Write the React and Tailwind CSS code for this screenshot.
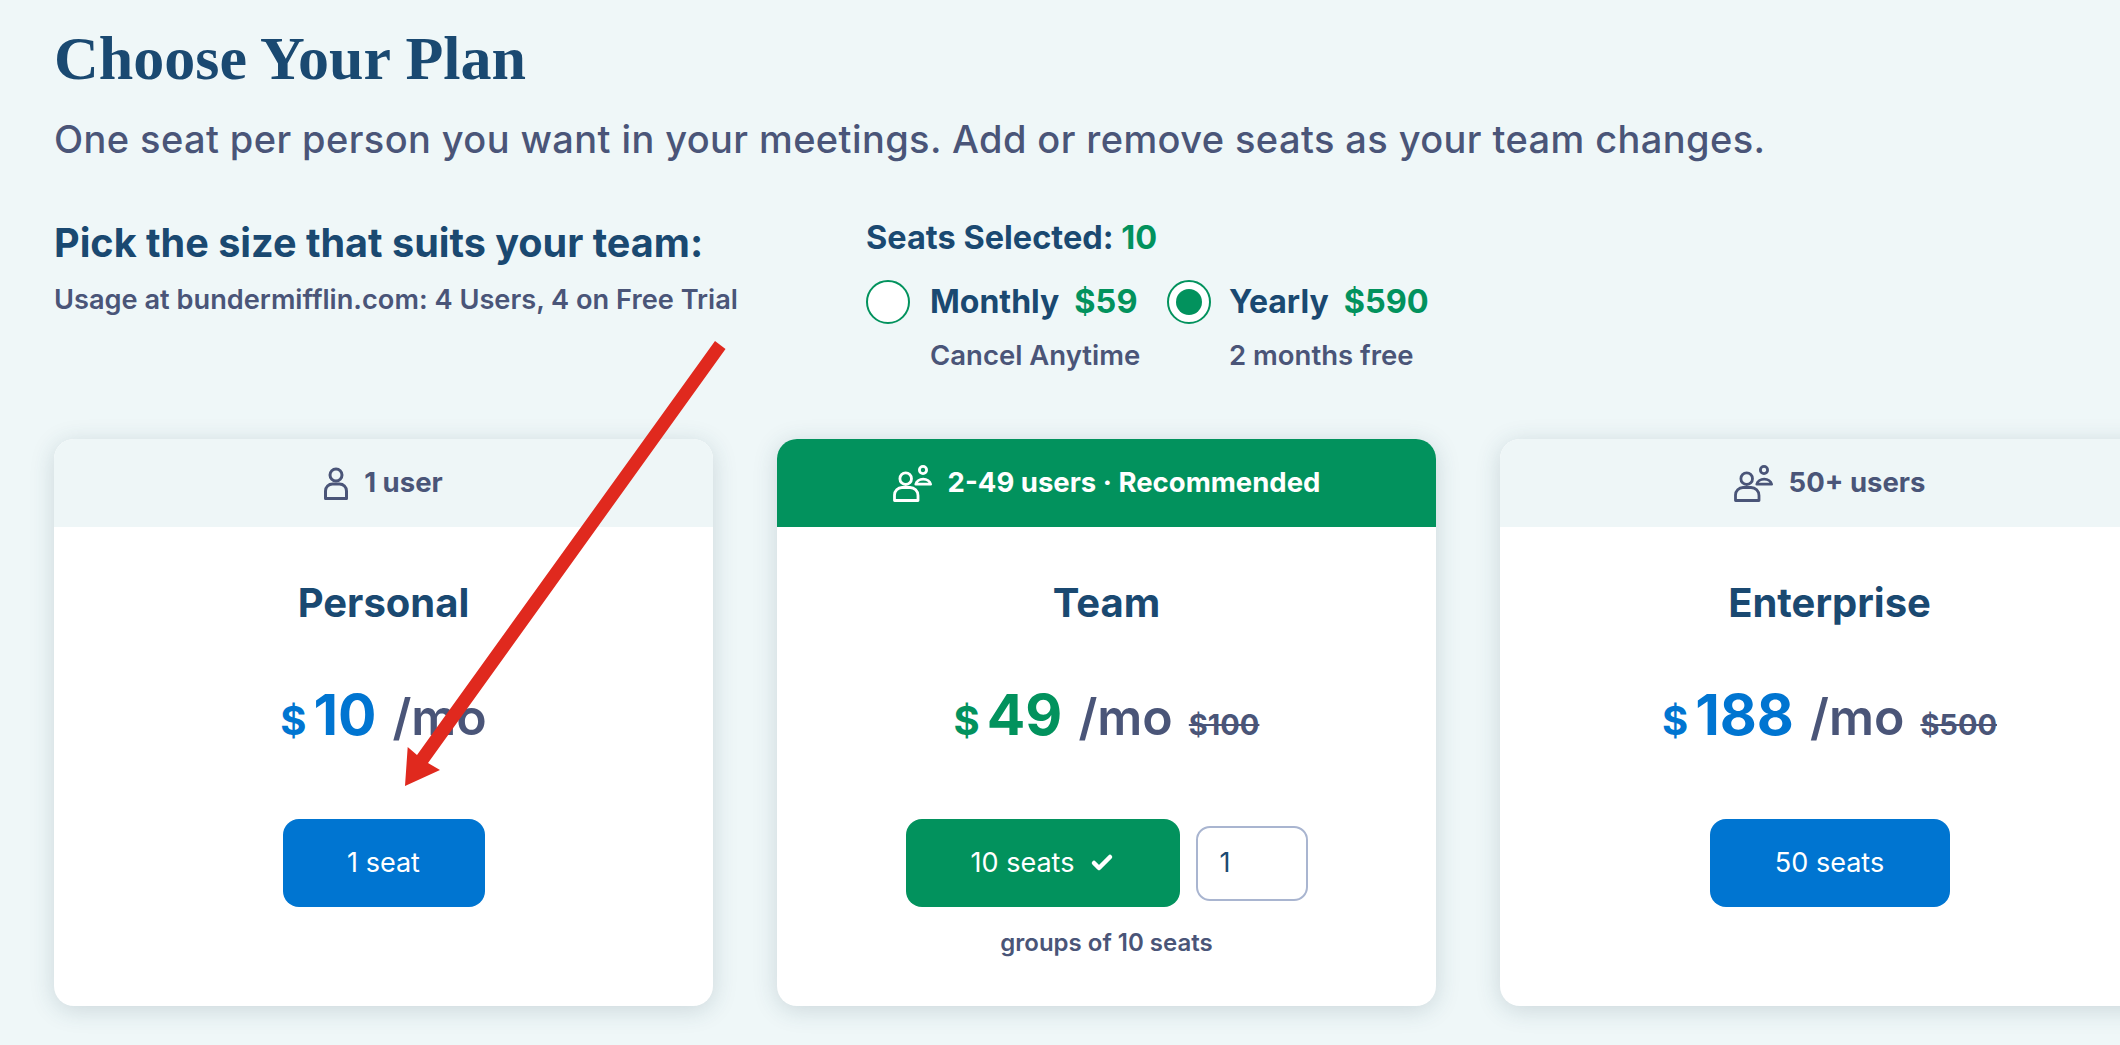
import { Check } from "lucide-react";

const font = "font-['Inter','Liberation_Sans',sans-serif]";

function UserIcon({ className }) {
  return (
    <svg viewBox="0 0 24 33" fill="none" stroke="currentColor" strokeWidth="3" className={className}>
      <circle cx="12" cy="8" r="6" />
      <path d="M1.5 31.5V24a7 7 0 0 1 7-7h7a7 7 0 0 1 7 7v7.5z" strokeLinejoin="round" />
    </svg>
  );
}

function UsersIcon({ className }) {
  return (
    <svg viewBox="0 0 39 37" fill="none" stroke="currentColor" strokeWidth="2.8" className={className}>
      <circle cx="12.7" cy="13.7" r="5.8" />
      <path d="M1.5 35.5V30a7.5 7.5 0 0 1 7.5-7.5h8a8 8 0 0 1 8 8v5z" strokeLinejoin="round" />
      <circle cx="30" cy="5" r="3.6" />
      <path d="M22.8 19.2a7.5 6 0 0 1 14.8 0z" strokeLinejoin="round" />
    </svg>
  );
}

function PlanCard({ audience, icon, name, price, was, accent, highlighted, children }) {
  return (
    <div className="w-[659px] h-[567px] shrink-0 rounded-[20px] bg-white overflow-hidden shadow-[0_4px_24px_rgba(40,70,90,0.18)]">
      <div className={`h-[88px] flex items-center justify-center gap-[16px] text-[27.5px] font-bold ${highlighted ? "bg-[#02925d] text-white" : "bg-[#eef6f7] text-[#4a5578]"}`}>
        {icon}
        <span>{audience}</span>
      </div>
      <div className="flex flex-col items-center">
        <h3 className="mt-[53px] text-[40px] leading-[46px] font-bold text-[#1a4971]">{name}</h3>
        <div className="mt-[54px] h-[70px] flex items-baseline">
          <span className={`text-[40px] font-bold ${accent}`}>$</span>
          <span className={`ml-[7px] text-[57px] leading-[70px] font-bold ${accent}`}>{price}</span>
          <span className="ml-[16px] text-[50px] font-semibold text-[#4a5578]">/mo</span>
          {was && <span className="ml-[16px] text-[29px] font-bold line-through text-[#4a5578]">{was}</span>}
        </div>
        {children}
      </div>
    </div>
  );
}

export default function App() {
  return (
    <div className={`relative w-[2120px] h-[1045px] overflow-hidden bg-[#eff7f8] pl-[54px] ${font}`}>
      <h1 className="pt-[28px] text-[62px] leading-[60px] font-bold font-['Liberation_Serif',serif] text-[#1a4971]">Choose Your Plan</h1>
      <p className="mt-[29px] text-[38px] leading-[44px] font-medium tracking-[0.4px] text-[#4a5578]">One seat per person you want in your meetings. Add or remove seats as your team changes.</p>

      <div className="mt-[59px] flex h-[219px]">
        <div className="w-[812px] pt-[1px]">
          <h2 className="text-[39.6px] leading-[44px] font-bold text-[#1a4971]">Pick the size that suits your team:</h2>
          <p className="mt-[19px] text-[27.2px] leading-[32px] font-semibold text-[#4a5578]">Usage at bundermifflin.com: 4 Users, 4 on Free Trial</p>
        </div>
        <div>
          <div className="text-[32.5px] leading-[36px] font-bold text-[#1a4971]">Seats Selected: <span className="text-[#02925d]">10</span></div>
          <div className="mt-[22px] flex">
            <div className="w-[301px]">
              <div className="flex items-center">
                <span className="w-[44px] h-[44px] rounded-full border-2 border-[#02925d] bg-white" />
                <span className="ml-[20px] text-[32px] font-bold text-[#1a4971]">Monthly</span>
                <span className="ml-[15px] text-[32.5px] font-bold text-[#02925d]">$59</span>
              </div>
              <div className="mt-[11px] ml-[64px] text-[27.5px] leading-[34px] font-semibold text-[#4a5578]">Cancel Anytime</div>
            </div>
            <div>
              <div className="flex items-center">
                <span className="w-[44px] h-[44px] rounded-full border-2 border-[#02925d] bg-white flex items-center justify-center">
                  <span className="w-[26px] h-[26px] rounded-full bg-[#02925d]" />
                </span>
                <span className="ml-[18px] text-[32px] font-bold text-[#1a4971]">Yearly</span>
                <span className="ml-[15px] text-[32.5px] font-bold text-[#02925d]">$590</span>
              </div>
              <div className="mt-[11px] ml-[62px] text-[27.5px] leading-[34px] font-semibold text-[#4a5578]">2 months free</div>
            </div>
          </div>
        </div>
      </div>

      <div className="flex gap-[64px]">
        <PlanCard audience="1 user" icon={<UserIcon className="w-[24px] h-[33px]" />} name="Personal" price="10" accent="text-[#0075d1]">
          <button className="mt-[69px] w-[202px] h-[88px] rounded-[16px] bg-[#0075d1] text-white text-[27px]">1 seat</button>
        </PlanCard>
        <PlanCard highlighted audience="2-49 users · Recommended" icon={<UsersIcon className="w-[39px] h-[37px]" />} name="Team" price="49" was="$100" accent="text-[#02925d]">
          <div className="mt-[69px] flex items-center gap-[16px]">
            <button className="w-[274px] h-[88px] rounded-[16px] bg-[#02925d] text-white text-[27px] flex items-center justify-center gap-[16px]">
              10 seats <Check className="w-[24px] h-[24px]" strokeWidth={4.5} />
            </button>
            <div className="w-[112px] h-[75px] rounded-[14px] border-2 border-[#a9b5d0] flex items-center pl-[22px] text-[27px] text-[#1a4971]">1</div>
          </div>
          <div className="mt-[18px] text-[24px] font-semibold text-[#4a5578]">groups of 10 seats</div>
        </PlanCard>
        <PlanCard audience="50+ users" icon={<UsersIcon className="w-[39px] h-[37px]" />} name="Enterprise" price="188" was="$500" accent="text-[#0075d1]">
          <button className="mt-[69px] w-[240px] h-[88px] rounded-[16px] bg-[#0075d1] text-white text-[27px]">50 seats</button>
        </PlanCard>
      </div>

      <svg className="absolute left-0 top-0 pointer-events-none" width="2120" height="1045">
        <polygon points="715,341 725.5,349 428,763 440,770 405,786 407.7,747 417,755" fill="#e0291e" />
      </svg>
    </div>
  );
}
